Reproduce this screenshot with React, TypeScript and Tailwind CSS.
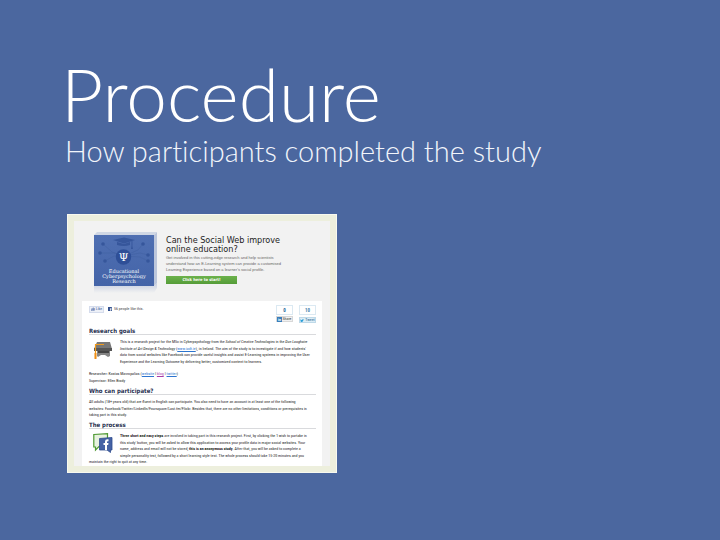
import type { ReactNode } from "react";

function Lines({ lines, className }: { lines: ReactNode[]; className: string }) {
  return (
    <p className={`flex flex-col justify-between whitespace-nowrap text-[4px] leading-[6px] ${className}`}>
      {lines.map((line, i) => (
        <span key={i} className="block">{line}</span>
      ))}
    </p>
  );
}

function Heading({ children }: { children: ReactNode }) {
  return (
    <h3 className="h-2 border-b border-[#d9dadd] text-[6px] font-bold leading-[7px] text-[#27304f] [font-family:'DejaVu_Sans_Condensed','DejaVu_Sans',sans-serif]">
      {children}
    </h3>
  );
}

function Anchor({ children, visited }: { children: ReactNode; visited?: boolean }) {
  return (
    <a href="#" className={`underline ${visited ? "text-[#a83ba8]" : "text-[#2c74cf]"}`}>{children}</a>
  );
}

function BookLogo() {
  return (
    <svg viewBox="0 0 64 62" className="h-[62px] w-16 shrink-0" role="img" aria-label="Educational Cyberpsychology Research">
      <defs>
        <linearGradient id="cover" x1="0" y1="0" x2="0" y2="1">
          <stop offset="0" stopColor="#4f6fb2" />
          <stop offset="1" stopColor="#4464a8" />
        </linearGradient>
        <linearGradient id="reflection" x1="0" y1="0" x2="0" y2="1">
          <stop offset="0" stopColor="#c6cee0" />
          <stop offset="1" stopColor="#f2f2f2" />
        </linearGradient>
      </defs>
      <path d="M0 54H60L63 51V56L60 61H0Z" fill="url(#reflection)" />
      <path d="M0 3L3 0H63L60 3Z" fill="#d0d7e4" />
      <path d="M60 3L63 0V51L60 54Z" fill="#bcc6db" />
      <rect y="3" width="60" height="51" fill="url(#cover)" />
      <g stroke="#4161a2" strokeWidth=".6" fill="none">
        <path d="M9 12L18 20L30 24L44 18L49 12M5 21H20L30 24L46 21L54 23M11 29L20 24H30L46 25L54 29" />
      </g>
      <g fill="#36569b">
        <circle cx="9" cy="12" r="1.8" />
        <circle cx="6" cy="21" r="1.8" />
        <circle cx="11" cy="29" r="1.8" />
        <circle cx="49" cy="12" r="1.8" />
        <circle cx="54" cy="23" r="1.8" />
        <circle cx="54" cy="29" r="1.8" />
        <circle cx="29.500" cy="25" r="7.700" fill="#2e4f97" />
        <path d="M19 8L30 5.500L41 8L30 11.500Z" />
        <path d="M23 10V13Q30 15 36 13V10L30 12Z" />
        <path d="M37.500 9H38.400V14L39 17H37L37.500 14Z" />
      </g>
      <g fill="#fff" textAnchor="middle" className="[font-family:'DejaVu_Serif',serif]">
        <text x="29.500" y="28.500" fontSize="11">Ψ</text>
        <g fontSize="5">
          <text x="30" y="41">Educational</text>
          <text x="30" y="46">Cyberpsychology</text>
          <text x="30" y="51">Research</text>
        </g>
      </g>
    </svg>
  );
}

function CapIcon() {
  return (
    <svg viewBox="0 0 20 18" className="h-[18px] w-5 shrink-0" aria-hidden="true">
      <path d="M4 1H17L19 8H1Z" fill="#777" />
      <path d="M1 7H19V10H1Z" fill="#555" />
      <path d="M4 10H17V15L15 16L12 14H8L5 16L4 15Z" fill="#858585" />
      <path d="M5 10H16V12H5Z" fill="#444" />
      <path d="M11 3.500H2.500V17" fill="none" stroke="#f09a1c" strokeWidth="1.200" />
      <path d="M1.500 12H3.500V18H1.500Z" fill="#ef8e16" />
    </svg>
  );
}

function ChatIcon() {
  return (
    <svg viewBox="0 0 20 20" className="h-5 w-5 shrink-0" aria-hidden="true">
      <path d="M.8 1.500L14.500.7V13L6 13.500L2.500 17V14H.8Z" fill="#e8f2df" stroke="#4d9831" strokeWidth="1.200" />
      <path d="M6.500 5.500L19 4.500V17H17.500V19.500L14 17H6.500Z" fill="#4562a5" stroke="#2f4b8d" strokeWidth=".8" />
      <path d="M12 17V12H10.500V10H12V8.500Q12 6.300 14.500 6.300H15.500V8.200H14.700Q14 8.200 14 9V10H15.500L15.200 12H14V17Z" fill="#fff" />
    </svg>
  );
}

function ShareBar() {
  return (
    <div className="flex justify-between">
      <div className="flex h-[8px] items-center gap-1 text-[4px] leading-[6px] text-[#444]">
        <button className="flex h-[7px] w-[15px] items-center justify-center gap-px border border-[#d5dcec] bg-[#edf0f7] text-[4px] leading-[4px] text-[#3b5998]">
          <svg viewBox="0 0 5 5" className="h-1 w-1" aria-hidden="true">
            <path d="M0 2H1V5H0ZM1.400 2.200L2.600.2Q3.500 0 3.200 1.700H5L4.500 4.700H1.400Z" fill="#7b90bd" />
          </svg>
          Like
        </button>
        <span className="flex items-center gap-[2px]">
          <svg viewBox="0 0 5 5" className="h-1 w-1" aria-hidden="true">
            <path d="M0 0H5V5H0Z" fill="#34528f" />
            <path d="M3 5V3H2.300V2.200H3Q3 .8 4.500 1V1.700H3.900V2.200H4.500V3H3.900V5Z" fill="#fff" />
          </svg>
          56 people like this.
        </span>
      </div>
      <div className="flex gap-[6px] text-center text-[4px]">
        <div className="flex w-[17px] flex-col gap-px">
          <span className="h-[10px] border border-[#dbe9f2] text-[5px] font-bold leading-[8px] text-[#27679c]">0</span>
          <button className="flex h-[6px] items-center border border-[#d8d8d8] bg-[#f1f1f1] leading-[4px] text-[#333]">
            <span className="h-[5px] w-[5px] shrink-0 bg-[#3a7ebc] text-[4px] font-bold leading-[5px] text-white">in</span>
            <span className="flex-1">Share</span>
          </button>
        </div>
        <div className="flex w-[17px] flex-col gap-[2px]">
          <span className="h-[10px] border border-[#dbe9f2] text-[5px] font-bold leading-[8px] text-[#4b86ad]">10</span>
          <button className="flex h-[6px] items-center justify-center gap-px border border-[#bfd9e8] bg-[#dcedf6] leading-[4px] text-[#28688f]">
            <svg viewBox="0 0 6 5" className="h-[3px] w-1" aria-hidden="true">
              <path d="M0 .5Q1.500 2 3 1.500Q3.500 0 5 .6L6 .4L5.400 1.500Q5 5 1.800 4.800L0 4.300L1.400 3.800Q0 3 0 .5Z" fill="#2b9fd8" />
            </svg>
            Tweet
          </button>
        </div>
      </div>
    </div>
  );
}

export default function App() {
  return (
    <main className="min-h-screen bg-[#4b679f] px-[65px] pt-[52px] pb-12">
      <h1 className="-ml-1 text-[73px] font-light leading-[84px] text-white [font-family:Lato,sans-serif]">Procedure</h1>
      <p className="text-[29px] font-light leading-[30px] text-[#f2f5fb] [font-family:Lato,sans-serif] [font-variant-ligatures:none]">
        How participants completed the study
      </p>

      <article className="mt-[48px] ml-[2px] w-[270px] border border-[#f8f9ef] bg-[#edefdd] p-[6px] text-[#222] [font-family:'Roboto_Condensed','Noto_Sans_Condensed','Open_Sans_Condensed','Liberation_Serif',serif]">
        <div className="bg-[#f2f2f2] px-2 pt-[11px]">
          <header className="flex h-[69px] gap-[8px] pl-[12px] [font-family:'DejaVu_Sans_Condensed','DejaVu_Sans',sans-serif]">
            <BookLogo />
            <div className="pt-[4px]">
              <h2 className="whitespace-nowrap text-[9px] leading-[9px] text-[#222]">
                Can the Social Web improve<br />online education?
              </h2>
              <Lines
                className="mt-px h-[17px] text-[#666] [font-family:'Liberation_Sans',sans-serif]"
                lines={[
                  "Get involved in this cutting-edge research and help scientists",
                  "understand how an E-Learning system can provide a customised",
                  "Learning Experience based on a learner's social profile.",
                ]}
              />
              <button className="mt-[4px] block h-2 w-[71px] bg-linear-to-b from-[#6cb24c] to-[#559c38] text-[4px] font-bold leading-[8px] text-white">
                Click here to start!
              </button>
            </div>
          </header>

          <div className="h-[165px] bg-white pl-[7px] pr-[6px] pt-1">
            <ShareBar />
            <section className="mt-[4px]">
              <Heading>Research goals</Heading>
              <div className="mt-1 flex h-[26px] gap-[7px] pl-[4px]">
                <div className="pt-[2px]"><CapIcon /></div>
                <Lines
                  className="h-[26px]"
                  lines={[
                    <>This is a research project for the MSc in Cyberpsychology from the <em>School of Creative Technologies</em> in the <em>Dun Laoghaire</em></>,
                    <><em>Institute of Art Design &amp; Technology</em> (<Anchor>www.iadt.ie</Anchor>), in Ireland. The aim of the study is to investigate if and how students'</>,
                    "data from social websites like Facebook can provide useful insights and assist E-Learning systems in improving the User",
                    "Experience and the Learning Outcome by delivering better, customized content to learners.",
                  ]}
                />
              </div>
              <Lines
                className="mt-[6px] h-[13px]"
                lines={[
                  <>Researcher: Kostas Mavropalias (<Anchor>website</Anchor> | <Anchor visited>blog</Anchor> | <Anchor>twitter</Anchor>)</>,
                  "Supervisor: Ellen Brady",
                ]}
              />
            </section>
            <section className="mt-[3px]">
              <Heading>Who can participate?</Heading>
              <Lines
                className="mt-1 h-[19px]"
                lines={[
                  "All adults (18+ years old) that are fluent in English can participate. You also need to have an account in at least one of the following",
                  "websites: Facebook/Twitter/LinkedIn/Foursquare/Last.fm/Flickr. Besides that, there are no other limitations, conditions or prerequisites in",
                  "taking part in this study.",
                ]}
              />
            </section>
            <section className="mt-[3px]">
              <Heading>The process</Heading>
              <div className="mt-1 flex h-[26px] gap-[7px] pl-[4px]">
                <ChatIcon />
                <Lines
                  className="h-[26px]"
                  lines={[
                    <><strong>Three short and easy steps</strong> are involved in taking part in this research project. First, by clicking the 'I wish to partake in</>,
                    "this study' button, you will be asked to allow this application to access your profile data in major social websites. Your",
                    <>name, address and email will not be stored, <strong>this is an anonymous study</strong>. After that, you will be asked to complete a</>,
                    "simple personality test, followed by a short learning style test. The whole process should take 15-20 minutes and you",
                  ]}
                />
              </div>
              <Lines className="h-[6px]" lines={["maintain the right to quit at any time."]} />
            </section>
          </div>
        </div>
      </article>
    </main>
  );
}
